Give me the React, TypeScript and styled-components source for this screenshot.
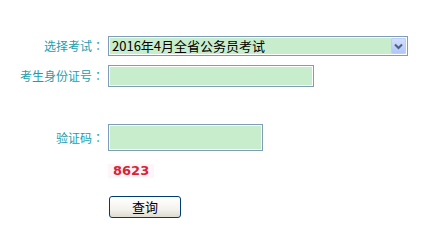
import styled, { createGlobalStyle } from 'styled-components';

const GlobalStyle = createGlobalStyle`
  html, body {
    margin: 0;
    padding: 0;
    background: #ffffff;
  }
  body {
    font-family: "Noto Sans CJK SC", "DejaVu Sans", sans-serif;
  }
`;

const Form = styled.div`
  display: flex;
  flex-direction: column;
  padding-top: 36px;
`;

const Row = styled.div<{ $height: number; $gap: number }>`
  display: flex;
  align-items: center;
  height: ${(p) => p.$height}px;
  margin-bottom: ${(p) => p.$gap}px;
`;

const Label = styled.div`
  width: 104px;
  text-align: right;
  font-size: 12px;
  line-height: 14px;
  color: #1a9eae;
  white-space: nowrap;
  margin-right: 4px;
`;

// full-width colon drawn centred in its box, as in the original page
const Colon = styled.span`
  font-family: "Noto Sans CJK JP", sans-serif;
`;

const SelectBox = styled.div`
  box-sizing: border-box;
  width: 300px;
  height: 20px;
  display: flex;
  align-items: stretch;
  border: 1px solid #7f9db9;
  background: #c8edcc;
  box-shadow: inset 0 0 0 1px #ffffff;
  padding: 1px;
`;

const SelectText = styled.div`
  flex: 1;
  font-size: 13px;
  line-height: 16px;
  color: #000;
  padding-left: 2px;
  white-space: nowrap;
`;

const ArrowButton = styled.div`
  width: 15px;
  display: flex;
  align-items: center;
  justify-content: center;
  background: linear-gradient(#d3defd, #b2c6f7);
  border: 1px solid #bccdf9;
  border-radius: 2px;
  box-sizing: border-box;
`;

const TextInput = styled.div<{ $width: number; $height: number }>`
  box-sizing: border-box;
  width: ${(p) => p.$width}px;
  height: ${(p) => p.$height}px;
  border: 1px solid #7f9db9;
  background: #c8edcc;
  box-shadow: inset 0 0 0 1px #ffffff;
`;

const Captcha = styled.div`
  margin-left: 108px;
  padding: 0 5px;
  font-family: "DejaVu Sans", sans-serif;
  font-weight: bold;
  font-size: 13px;
  line-height: 14px;
  color: #d72437;
  background: #fdf5f7;
`;

const SubmitButton = styled.button`
  box-sizing: border-box;
  margin-left: 109px;
  width: 72px;
  height: 22px;
  padding: 0;
  border: 1px solid #003c74;
  border-radius: 3px;
  background: linear-gradient(#ffffff 0%, #f4f3ee 60%, #dedbd0 100%);
  font-family: "Noto Sans CJK SC", sans-serif;
  font-size: 13px;
  line-height: 16px;
  color: #000;
`;

const App = () => {
  return (
    <>
      <GlobalStyle />
      <Form>
        <Row $height={20} $gap={9}>
          <Label>
            选择考试<Colon>：</Colon>
          </Label>
          <SelectBox>
            <SelectText>2016年4月全省公务员考试</SelectText>
            <ArrowButton>
              <svg width="9" height="7" viewBox="0 0 9 7">
                <path d="M1 1.5 L4.5 5 L8 1.5" fill="none" stroke="#4d6185" strokeWidth="2" />
              </svg>
            </ArrowButton>
          </SelectBox>
        </Row>
        <Row $height={22} $gap={37}>
          <Label>
            考生身份证号<Colon>：</Colon>
          </Label>
          <TextInput $width={206} $height={22} />
        </Row>
        <Row $height={27} $gap={13}>
          <Label>
            验证码<Colon>：</Colon>
          </Label>
          <TextInput $width={155} $height={27} />
        </Row>
        <Row $height={14} $gap={18}>
          <Captcha>8623</Captcha>
        </Row>
        <Row $height={22} $gap={0}>
          <SubmitButton>查询</SubmitButton>
        </Row>
      </Form>
    </>
  );
};

export default App;
